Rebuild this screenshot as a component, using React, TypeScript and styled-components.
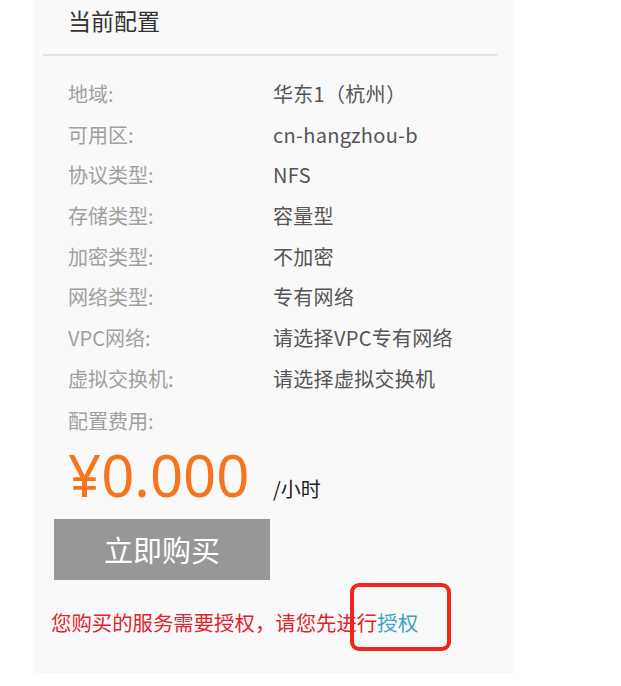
import React, { FC } from 'react';
import styled, { createGlobalStyle } from 'styled-components';

const GlobalStyle = createGlobalStyle`
  body {
    margin: 0;
    background: #ffffff;
    font-family: "Noto Sans CJK SC", "Noto Sans", sans-serif;
  }
`;

const Panel = styled.div`
  position: relative;
  margin-left: 33px;
  width: 480px;
  height: 673px;
  background-color: #f9f9f9;
  display: flex;
  flex-direction: column;
`;

const Title = styled.div`
  padding-left: 35px;
  height: 40px;
  line-height: 40px;
  font-size: 23px;
  color: #333333;
`;

const Divider = styled.div`
  margin: 14px 16px 0 10px;
  height: 2px;
  background-color: #e2e2e2;
`;

const Rows = styled.div`
  margin-top: 17px;
  padding-left: 35px;
  display: flex;
  flex-direction: column;
`;

const Row = styled.div`
  display: grid;
  grid-template-columns: 205px 1fr;
  height: 40.7px;
  align-items: center;
  font-size: 20px;
`;

const Label = styled.span`
  color: #a0a0a0;
`;

const Value = styled.span`
  color: #555555;
  letter-spacing: 0.3px;
`;

const FeeLabel = styled.div`
  margin-top: 10px;
  padding-left: 35px;
  height: 24px;
  line-height: 24px;
  font-size: 20px;
  color: #a0a0a0;
`;

const PriceLine = styled.div`
  padding: 2px 0 0 35px;
  display: flex;
  align-items: baseline;
`;

const Price = styled.span`
  width: 205px;
  font-size: 58px;
  line-height: 80px;
  color: #f5751e;
  font-family: "Noto Sans", "Noto Sans CJK SC", sans-serif;
`;

const Unit = styled.span`
  font-size: 20px;
  color: #222222;
`;

const BuyButton = styled.button`
  margin: 4px 0 0 21px;
  width: 216px;
  height: 61px;
  border: none;
  background-color: #979797;
  color: #ffffff;
  font-family: inherit;
  font-size: 29px;
  cursor: pointer;
  padding: 0;
`;

const Notice = styled.div`
  margin: 28px 0 0 18px;
  font-size: 20.4px;
  line-height: 28px;
  color: #e0242e;
`;

const AuthLink = styled.a`
  color: #3aa5bf;
  text-decoration: none;
`;

const Highlight = styled.div`
  position: absolute;
  left: 317px;
  top: 583px;
  width: 93px;
  height: 60px;
  border: 4px solid #f2251a;
  border-radius: 9px;
  pointer-events: none;
`;

const config: [string, string][] = [
  ['地域:', '华东1（杭州）'],
  ['可用区:', 'cn-hangzhou-b'],
  ['协议类型:', 'NFS'],
  ['存储类型:', '容量型'],
  ['加密类型:', '不加密'],
  ['网络类型:', '专有网络'],
  ['VPC网络:', '请选择VPC专有网络'],
  ['虚拟交换机:', '请选择虚拟交换机'],
];

const App: FC = () => (
  <>
    <GlobalStyle />
    <Panel>
      <Title>当前配置</Title>
      <Divider />
      <Rows>
        {config.map(([label, value]) => (
          <Row key={label}>
            <Label>{label}</Label>
            <Value>{value}</Value>
          </Row>
        ))}
      </Rows>
      <FeeLabel>配置费用:</FeeLabel>
      <PriceLine>
        <Price>¥0.000</Price>
        <Unit>/小时</Unit>
      </PriceLine>
      <div>
        <BuyButton>立即购买</BuyButton>
      </div>
      <Notice>
        您购买的服务需要授权，请您先进行<AuthLink href="#">授权</AuthLink>
      </Notice>
      <Highlight />
    </Panel>
  </>
);

export default App;
